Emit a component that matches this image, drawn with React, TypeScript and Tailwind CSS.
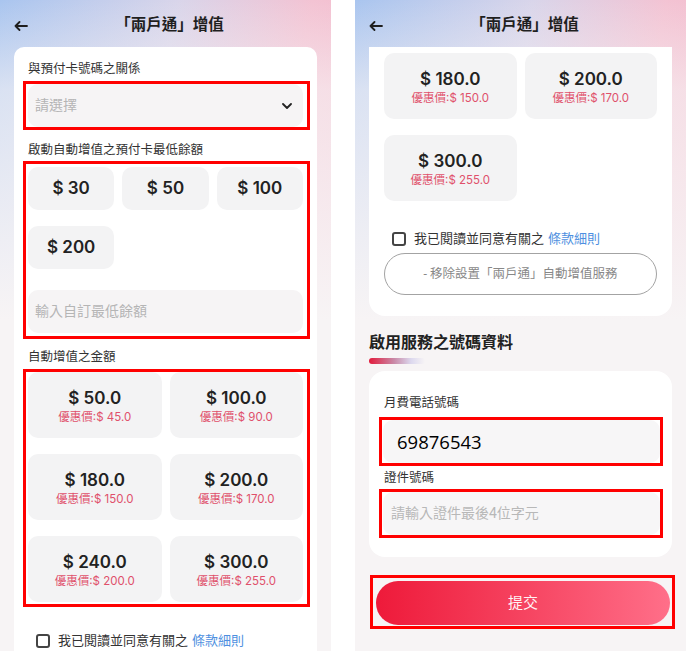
import React from 'react';

// Screens: left is the top of the form, right is the same form scrolled down
const minAmounts = ['$ 30', '$ 50', '$ 100', '$ 200'];

const topUps = [
  { amount: '$ 50.0', price: '$ 45.0' },
  { amount: '$ 100.0', price: '$ 90.0' },
  { amount: '$ 180.0', price: '$ 150.0' },
  { amount: '$ 200.0', price: '$ 170.0' },
  { amount: '$ 240.0', price: '$ 200.0' },
  { amount: '$ 300.0', price: '$ 255.0' },
];

const phoneBg =
  'bg-[linear-gradient(180deg,rgba(247,244,245,0)_0px,rgba(247,244,245,0.6)_90px,#f7f4f5_320px),linear-gradient(100deg,#a9c5ef_0%,#d9d5ea_40%,#f3c3d3_70%,#f5b6c9_100%)]';

const numFont = "font-['Inter','Noto_Sans_CJK_TC',sans-serif]";

function BackArrow() {
  return (
    <svg width="14" height="10" viewBox="0 0 14 10" className="absolute left-[14px] top-[21px]">
      <path d="M13 5H1.5M5.5 1L1.5 5l4 4" fill="none" stroke="#1f1f1f" strokeWidth="1.8" strokeLinecap="round" strokeLinejoin="round" />
    </svg>
  );
}

function Header() {
  return (
    <div className="relative flex h-[47px] shrink-0 items-center justify-center pl-[8px] pt-[4px]">
      <BackArrow />
      <h1 className="text-[15.5px] font-bold text-[#1f1f1f]">「兩戶通」增值</h1>
    </div>
  );
}

function Label({ children }: { children: React.ReactNode }) {
  return <p className="text-[12.5px] leading-[18px] text-[#333]">{children}</p>;
}

function TopUpCard({ amount, price }: { amount: string; price: string }) {
  return (
    <div className={`flex h-[66px] flex-col items-center justify-center rounded-[10px] bg-[#f3f3f4] pt-[2px] ${numFont}`}>
      <span className="text-[17px] font-semibold leading-[22px] text-[#222]">{amount}</span>
      <span className="text-[11.5px] leading-[16px] text-[#e0506b]">優惠價:{price}</span>
    </div>
  );
}

function Agree() {
  return (
    <div className="flex h-[18px] items-center pl-[8px] text-[13px] text-[#333]">
      <span className="mr-[8px] h-[14px] w-[14px] rounded-[3px] border-2 border-[#444]" />
      <span>我已閱讀並同意有關之</span>
      <span className="ml-[4px] text-[#4d8fe0]">條款細則</span>
    </div>
  );
}

function LeftPhone() {
  return (
    <div className={`flex h-[651px] w-[331px] shrink-0 flex-col overflow-hidden ${phoneBg}`}>
      <Header />
      <div className="mx-[14px] flex-1 rounded-t-[10px] bg-white px-[14px] pt-[13px]">
        <Label>與預付卡號碼之關係</Label>
        <div className="-ml-[5px] -mr-[7px] mt-[3px] border-[3px] border-[#ff0000] pl-[2px] pr-[4px]">
          <div className="flex h-[43px] items-center justify-between rounded-[10px] bg-[#f6f4f5] pl-[7px] pr-[11px]">
            <span className="text-[14px] text-[#b5b5b5]">請選擇</span>
            <svg width="10" height="6" viewBox="0 0 10 6">
              <path d="M1 1l4 4 4-4" fill="none" stroke="#222" strokeWidth="1.8" strokeLinecap="round" strokeLinejoin="round" />
            </svg>
          </div>
        </div>

        <div className="mt-[11px]">
          <Label>啟動自動增值之預付卡最低餘額</Label>
        </div>
        <div className="-ml-[5px] -mr-[7px] mt-[2px] border-[3px] border-[#ff0000] pb-[3px] pl-[2px] pr-[4px] pt-[3px]">
          <div className="grid grid-cols-3 gap-x-[8px] gap-y-[16px]">
            {minAmounts.map((a) => (
              <div key={a} className={`flex h-[43px] items-center justify-center rounded-[10px] bg-[#f3f3f4] text-[17px] font-semibold text-[#222] ${numFont}`}>
                {a}
              </div>
            ))}
          </div>
          <div className="mt-[21px] flex h-[43px] items-center rounded-[10px] bg-[#f6f4f5] pl-[7px] text-[14px] text-[#b5b5b5]">
            輸入自訂最低餘額
          </div>
        </div>

        <div className="mt-[9px]">
          <Label>自動增值之金額</Label>
        </div>
        <div className="-ml-[5px] -mr-[7px] mt-[3px] border-[3px] border-[#ff0000] pb-[2px] pl-[2px] pr-[4px]">
          <div className="grid grid-cols-2 gap-x-[8px] gap-y-[16px]">
            {topUps.map((t) => (
              <TopUpCard key={t.amount} {...t} />
            ))}
          </div>
        </div>

        <div className="mt-[25px]">
          <Agree />
        </div>
      </div>
    </div>
  );
}

function RightPhone() {
  const shown = [topUps[2], topUps[3], topUps[5]];
  return (
    <div className={`flex h-[651px] w-[331px] shrink-0 flex-col overflow-hidden ${phoneBg}`}>
      <Header />
      <div className="mx-[14px] rounded-b-[16px] bg-white px-[15px] pb-[21px] pt-[6px]">
        <div className="grid grid-cols-2 gap-x-[8px] gap-y-[16px]">
          {shown.map((t) => (
            <TopUpCard key={t.amount} {...t} />
          ))}
        </div>
        <div className="mt-[29px]">
          <Agree />
        </div>
        <div className="mt-[5px] flex h-[42px] items-center justify-center rounded-full border border-[#a3a3a3] text-[12.5px] text-[#888]">
          - 移除設置「兩戶通」自動增值服務
        </div>
      </div>

      <div className="mx-[14px]">
        <h2 className="mt-[16px] text-[16px] font-bold leading-[22px] text-[#222]">啟用服務之號碼資料</h2>
        <div className="mt-[4px] h-[6px] w-[56px] rounded-full bg-[linear-gradient(90deg,#e21b3c_0%,#c98aa8_45%,#dcd8ee_75%,rgba(230,226,242,0)_100%)]" />

        <div className="mt-[7px] rounded-[16px] bg-white px-[14px] pb-[19px] pt-[23px]">
          <div className="pl-[1px]">
            <Label>月費電話號碼</Label>
          </div>
          <div className="-ml-[4px] -mr-[5px] mt-[5px] border-[3px] border-[#ff0000] pl-[1px]">
            <div className="flex h-[43px] items-center rounded-[10px] bg-[#f7f6f7] pl-[14px] font-['Open_Sans',sans-serif] text-[18.5px] text-black">
              69876543
            </div>
          </div>
          <div className="mt-[3px] pl-[1px]">
            <Label>證件號碼</Label>
          </div>
          <div className="-ml-[4px] -mr-[5px] mt-[2px] border-[3px] border-[#ff0000] pl-[1px]">
            <div className="flex h-[43px] items-center rounded-[10px] bg-[#f7f6f7] pl-[8px] text-[14px] text-[#b8b8b8]">
              請輸入證件最後4位字元
            </div>
          </div>
        </div>

        <div className="-mr-[3px] ml-px mt-[18px] border-[3px] border-[#ff0000] pb-[1px] pl-[3px] pr-[2px] pt-[3px]">
          <div className="flex h-[44px] items-center justify-center rounded-full bg-[linear-gradient(90deg,#ee1a3a_0%,#f53f5c_45%,#ff6f89_100%)] text-[15px] text-[#fff3f5]">
            提交
          </div>
        </div>
      </div>
    </div>
  );
}

export default function App() {
  return (
    <div className="flex h-[654px] w-[686px] gap-[24px] overflow-hidden bg-white font-['Roboto','Noto_Sans_CJK_TC',sans-serif]">
      <LeftPhone />
      <RightPhone />
    </div>
  );
}
